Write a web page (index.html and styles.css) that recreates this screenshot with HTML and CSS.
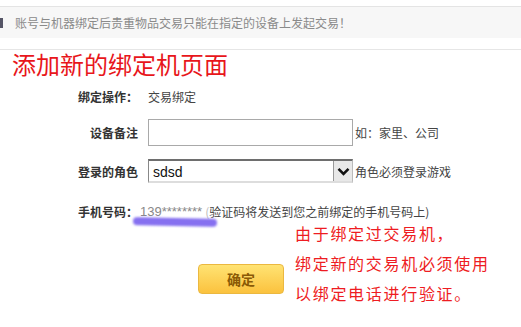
FILE: index.html
```html
<!DOCTYPE html>
<html lang="zh-CN">
<head>
  <meta charset="UTF-8">
  <meta name="viewport" content="width=device-width, initial-scale=1.0">
  <title>添加新的绑定机</title>
  <link rel="stylesheet" href="styles.css">
</head>
<body>

  <div class="tip-bar">
    <span class="tip-mark"></span>
    <span class="tip-txt">账号与机器绑定后贵重物品交易只能在指定的设备上发起交易！</span>
  </div>

  <div class="page-main">
    <h1 class="page-title">添加新的绑定机页面</h1>

    <form class="bind-form">
      <div class="form-row row-op">
        <span class="lab-g">绑定操作：</span>
        <span class="val-g">交易绑定</span>
      </div>
      <div class="form-row row-memo">
        <label for="memo" class="lab-g">设备备注</label>
        <input type="text" id="memo" class="tf-g">
        <span class="hint-g">如：家里、公司</span>
      </div>
      <div class="form-row row-role">
        <span class="lab-g">登录的角色</span>
        <div class="sel-g">
          <span class="sel-txt">sdsd</span>
          <span class="sel-arrow">
            <svg width="13" height="9" viewBox="0 0 13 9"><path d="M1.5 1.8 L6.5 6.8 L11.5 1.8" fill="none" stroke="#111" stroke-width="2.6"/></svg>
          </span>
        </div>
        <span class="hint-g">角色必须登录游戏</span>
      </div>
      <div class="form-row row-phone">
        <span class="lab-g">手机号码：</span>
        <span class="phone-num">139********<span class="phone-mark"></span></span>
        <span class="phone-info"><span class="paren">(</span>验证码将发送到您之前绑定的手机号码上)</span>
      </div>

      <div class="confirm-area">
        <button type="button" class="btn-ok">确定</button>
        <p class="note-red">由于绑定过交易机，<br>绑定新的交易机必须使用<br>以绑定电话进行验证。</p>
      </div>
    </form>
  </div>

</body>
</html>
```

FILE: styles.css
```css
/* 초기화 */
* {
  margin: 0;
  padding: 0;
  box-sizing: border-box;
}
body {
  width: 100%;
  background-color: #FFFFFF;
  font-family: "Noto Sans CJK SC", "Liberation Sans", sans-serif;
  font-size: 12px;
  color: #333;
  overflow: hidden;
}
button {
  border: 0;
  cursor: pointer;
  font-family: inherit;
}

/* 상단 안내 바 */
.tip-bar {
  display: flex;
  align-items: center;
  height: 32px;
  margin-top: 6px;
  border-top: 1px solid #E4E4E4;
  background-color: #F7F7F7;
}
.tip-mark {
  width: 3px;
  height: 10px;
  background-color: #556;
}
.tip-txt {
  margin-left: 12px;
  color: #8A8A8A;
  line-height: 31px;
}

.page-main {
  margin-top: 11px;
  border-top: 1px solid #E6E6E6;
}
.page-title {
  padding-left: 12px;
  font-size: 24px;
  font-weight: normal;
  line-height: 28px;
  color: #E8161B;
}

/* 폼 */
.bind-form {
  padding-left: 78px;
}
.form-row {
  display: flex;
  align-items: center;
}
.lab-g {
  width: 60px;
  margin-right: 10px;
  text-align: right;
  font-weight: bold;
  color: #333;
  white-space: nowrap;
}
.val-g {
  color: #444;
}
.row-op {
  margin-top: 8px;
  height: 20px;
}
.row-memo {
  margin-top: 13px;
  height: 27px;
}
.tf-g {
  width: 205px;
  height: 27px;
  border: 1px solid #A9A9A9;
  outline: 0;
}
.hint-g {
  margin-left: 2px;
  color: #444;
}
.row-role {
  margin-top: 13px;
  height: 24px;
}
.sel-g {
  display: flex;
  align-items: stretch;
  width: 205px;
  height: 24px;
  border-top: 2px solid #6E6E6E;
  border-left: 1px solid #888;
  border-right: 1px solid #BBB;
  border-bottom: 2px solid #DDD;
}
.sel-txt {
  flex: 1;
  padding: 2px 0 0 4px;
  font-family: "Liberation Sans", sans-serif;
  font-size: 14px;
  line-height: 18px;
  color: #111;
}
.sel-arrow {
  display: flex;
  align-items: center;
  justify-content: center;
  width: 19px;
  border-left: 1px solid #999;
  background-color: #E8E8E8;
}

.row-phone {
  margin-top: 18px;
  height: 20px;
}
.row-phone .lab-g {
  margin-right: 2px;
}
.phone-num {
  position: relative;  /* 보라색 밑줄용 */
  font-family: "Liberation Sans", sans-serif;
  font-size: 13px;
  color: #888;
}
.phone-mark {
  display: block;
  position: absolute;
  left: -7px;
  top: 14px;
  width: 84px;
  height: 8px;
  border-radius: 4px;
  background-color: #8670F0;
  filter: blur(1px);
  transform: rotate(1.2deg);
}
.phone-info {
  margin-left: 3px;
  color: #444;
}
.paren {
  color: #BBB;
}

/* 확인 버튼 + 빨간 설명 */
.confirm-area {
  display: flex;
  align-items: flex-start;
  margin-top: -3px;
  padding-left: 120px;
}
.btn-ok {
  width: 86px;
  height: 30px;
  margin-top: 46px;
  border: 1px solid #EBB840;
  border-radius: 4px;
  background: linear-gradient(#FFE373, #FBC23E);
  font-size: 14px;
  font-weight: bold;
  color: #8A5A06;
}
.note-red {
  margin-left: 11px;
  font-size: 16px;
  letter-spacing: 1.7px;
  line-height: 30px;
  color: #EE1C22;
  white-space: nowrap;
}
```
